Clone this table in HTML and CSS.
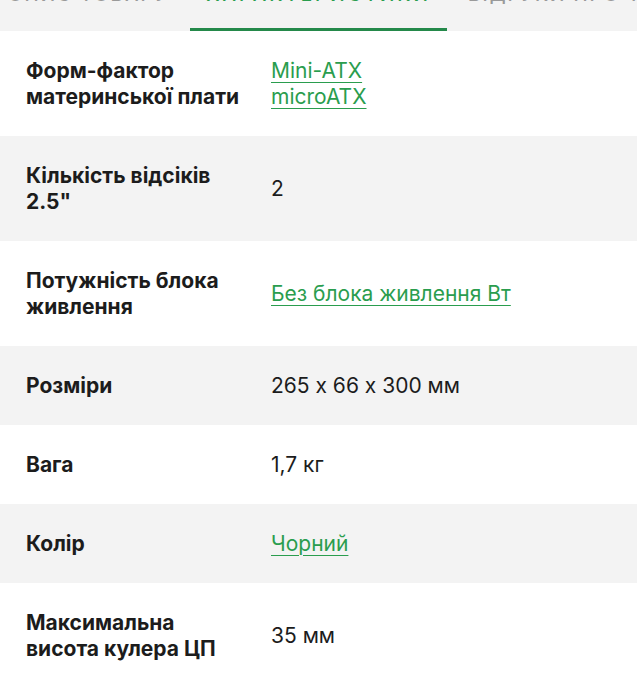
FILE: index.html
```html
<!DOCTYPE html>
<html lang="uk">
<head>
<meta charset="utf-8">
<link rel="stylesheet" href="styles.css">
</head>
<body>
<nav class="tabs">
  <div class="tab">ОПИС ТОВАРУ</div>
  <div class="tab tab-active">ХАРАКТЕРИСТИКИ</div>
  <div class="tab">ВІДГУКИ ПРО ТОВАР</div>
</nav>
<div class="specs">
  <div class="row">
    <div class="label">Форм-фактор материнської плати</div>
    <div class="value"><a href="#">Mini-ATX</a><br><a href="#">microATX</a></div>
  </div>
  <div class="row alt">
    <div class="label">Кількість відсіків 2.5"</div>
    <div class="value">2</div>
  </div>
  <div class="row">
    <div class="label">Потужність блока живлення</div>
    <div class="value"><a href="#">Без блока живлення Вт</a></div>
  </div>
  <div class="row alt">
    <div class="label">Розміри</div>
    <div class="value">265 x 66 x 300 мм</div>
  </div>
  <div class="row">
    <div class="label">Вага</div>
    <div class="value">1,7 кг</div>
  </div>
  <div class="row alt">
    <div class="label">Колір</div>
    <div class="value"><a href="#">Чорний</a></div>
  </div>
  <div class="row">
    <div class="label">Максимальна висота кулера ЦП</div>
    <div class="value">35 мм</div>
  </div>
</div>
</body>
</html>
```
FILE: styles.css
```css
html, body {
  margin: 0;
  padding: 0;
  background: #fff;
}
body {
  font-family: "Inter", "Open Sans", sans-serif;
  font-feature-settings: "calt" 0;
  color: #1c1c1c;
  width: 637px;
  overflow: hidden;
}
.tabs {
  display: flex;
  height: 31px;
  background: #f3f3f3;
  overflow: hidden;
  white-space: nowrap;
  padding-left: 8px;
}
.tab {
  font-size: 19px;
  line-height: 19px;
  margin-top: -15px;
  color: #9a9a9a;
  letter-spacing: 2px;
  font-weight: 500;
  width: 182px;
  flex: none;
  border-bottom: 3px solid transparent;
  height: 46px;
  box-sizing: border-box;
}
.tab-active {
  width: 257px;
  color: #2a9d4e;
  letter-spacing: 3px;
  border-bottom-color: #24894a;
  text-align: center;
}
.tab:last-child {
  padding-left: 21px;
}
.specs {
  display: flex;
  flex-direction: column;
}
.row {
  display: grid;
  grid-template-columns: 245px 1fr;
  align-items: center;
  padding: 26.5px 26px;
  font-size: 21px;
  line-height: 26px;
}
.row.alt {
  background: #f3f3f3;
}
.label {
  font-weight: 700;
  max-width: 217px;
}
.value a {
  color: #2a9d4e;
  text-decoration: underline;
  text-underline-offset: 4px;
  text-decoration-thickness: 1px;
}
```
